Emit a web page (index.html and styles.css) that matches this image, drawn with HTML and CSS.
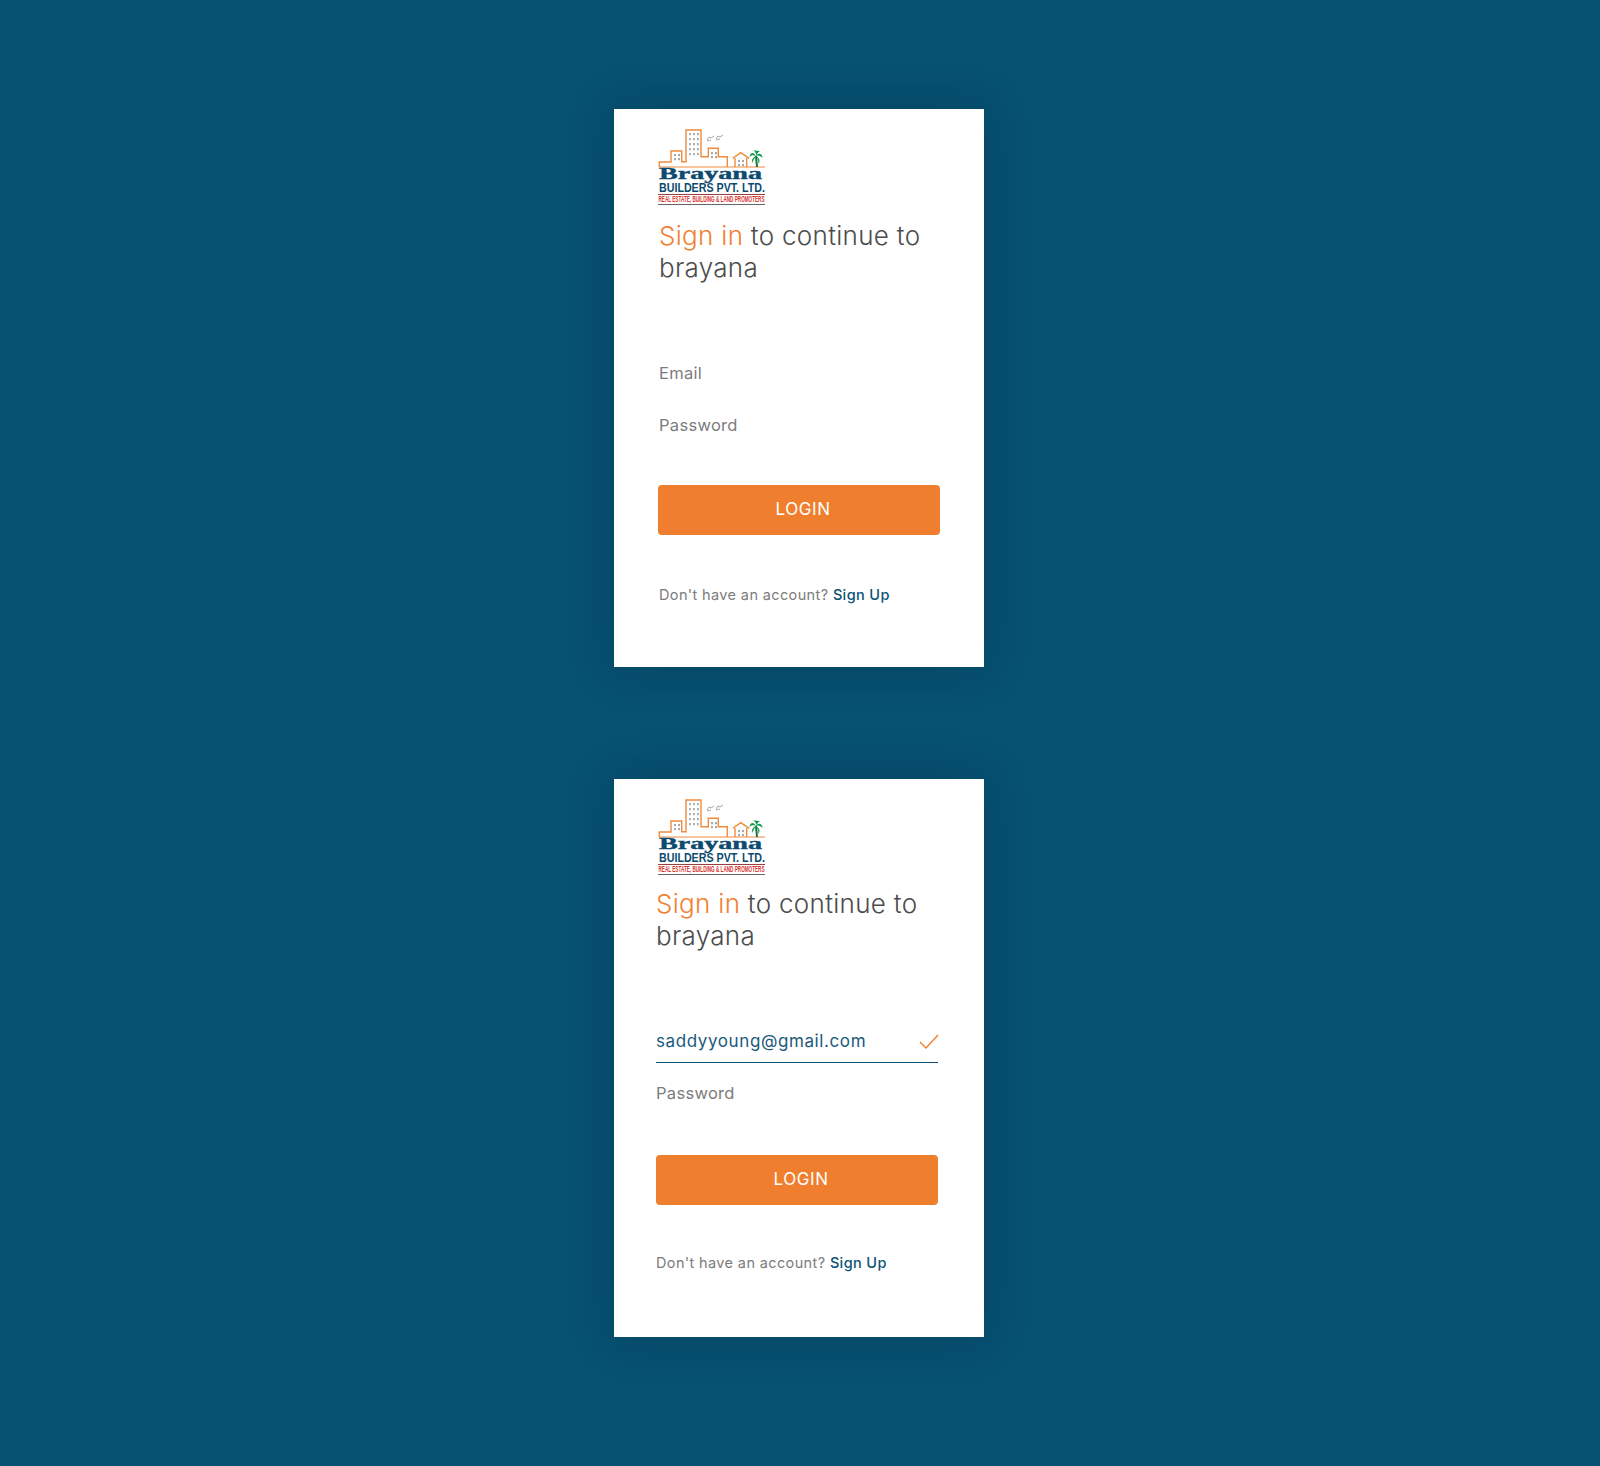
FILE: index.html
```html
<!DOCTYPE html>
<html lang="en">

<head>
    <meta charset="UTF-8">
    <meta name="viewport" content="width=device-width, initial-scale=1.0">
    <title>Sign in</title>
    <link rel="stylesheet" href="styles.css">
</head>

<body>
    <svg class="defs" width="0" height="0">
        <defs>
            <symbol id="logo" viewBox="0 0 108 78">
                <g fill="none" stroke="#f08a3c" stroke-width="1.4">
                    <path d="M1.3 39V34H13V23H23.7V33.7H28V2H43V28.7H50.3V20.3H60.3V28.7H69.3V39" />
                    <path d="M74.7 30.3L82.7 24.7L91.3 30.3" />
                    <path d="M77 30V39M88.7 30V39" />
                </g>
                <rect x="1" y="38.5" width="106" height="1" fill="#f08a3c" />
                <g fill="#a8a8a8">
                    <rect x="31" y="5" width="1.8" height="2.2" />
                    <rect x="35" y="5" width="1.8" height="2.2" />
                    <rect x="39" y="5" width="1.8" height="2.2" />
                    <rect x="31" y="10" width="1.8" height="2.2" />
                    <rect x="35" y="10" width="1.8" height="2.2" />
                    <rect x="39" y="10" width="1.8" height="2.2" />
                    <rect x="31" y="15" width="1.8" height="2.2" />
                    <rect x="35" y="15" width="1.8" height="2.2" />
                    <rect x="39" y="15" width="1.8" height="2.2" />
                    <rect x="31" y="20" width="1.8" height="2.2" />
                    <rect x="35" y="20" width="1.8" height="2.2" />
                    <rect x="39" y="20" width="1.8" height="2.2" />
                    <rect x="31" y="25" width="1.8" height="2.2" />
                    <rect x="35" y="25" width="1.8" height="2.2" />
                    <rect x="39" y="25" width="1.8" height="2.2" />
                    <rect x="16" y="26" width="2" height="2.2" />
                    <rect x="20" y="26" width="2" height="2.2" />
                    <rect x="16" y="30" width="2" height="2.2" />
                    <rect x="20" y="30" width="2" height="2.2" />
                    <rect x="53" y="24" width="2" height="2.2" />
                    <rect x="57" y="24" width="2" height="2.2" />
                    <rect x="53" y="28" width="2" height="2.2" />
                    <rect x="57" y="28" width="2" height="2.2" />
                    <rect x="80" y="32" width="2" height="2.2" />
                    <rect x="84" y="32" width="2" height="2.2" />
                    <rect x="80" y="36" width="2" height="2" />
                    <rect x="84" y="36" width="2" height="2" />
                </g>
                <path d="M49 12l2-3 2 1 3-2M49 13l4-1M58 11l2-3 2 1 3-2M58 12l4-1" fill="none" stroke="#8f8f8f" stroke-width="0.8" />
                <path d="M99 39L98 28" stroke="#17753a" stroke-width="2" />
                <path d="M98 28C95.500 24 92.500 24 91.500 29C93.500 27 95.500 27 98 28C95.500 29 93.500 31 94 35C95.500 32 96.500 30 98 28C99.500 30 100.500 32 100.500 36C102.500 33 101.500 30 98 28C100.500 27 102.500 28 104.500 30C104.500 26 100.500 24 98 28C98.500 26 97.500 23 94.500 22C96.500 23 100.500 22 102.500 24C100.500 23 99.500 25 98 28Z" fill="#0d9a4a" />
                <text class="logo-name" x="1" y="51" textLength="103" lengthAdjust="spacingAndGlyphs">Brayana</text>
                <text class="logo-sub" x="1" y="64" textLength="106" lengthAdjust="spacingAndGlyphs">BUILDERS PVT. LTD.</text>
                <rect x="0" y="66" width="107" height="0.9" fill="#8c2a2a" />
                <text class="logo-tag" x="0.5" y="74.3" textLength="106" lengthAdjust="spacingAndGlyphs">REAL ESTATE, BUILDING &amp; LAND PROMOTERS</text>
                <rect x="0" y="76" width="107" height="0.9" fill="#555" />
            </symbol>
        </defs>
    </svg>

    <div class="card">
        <svg class="logo" width="108" height="78"><use href="#logo"></use></svg>
        <div class="content">
            <h1><span>Sign in</span> to continue to brayana</h1>
            <div class="inputbox first">
                <label>Email</label>
            </div>
            <div class="inputbox">
                <label>Password</label>
            </div>
            <button type="submit">LOGIN</button>
            <p class="signup">Don't have an account? <a href="#">Sign Up</a></p>
        </div>
    </div>

    <div class="card filled">
        <svg class="logo" width="108" height="78"><use href="#logo"></use></svg>
        <div class="content">
            <h1><span>Sign in</span> to continue to brayana</h1>
            <div class="inputbox first active">
                <label>saddyyoung@gmail.com</label>
                <svg class="check" width="20" height="16" viewBox="0 0 20 16">
                    <path d="M1 8L7 14L19 1" fill="none" stroke="#f08030" stroke-width="1.4" />
                </svg>
            </div>
            <div class="inputbox">
                <label>Password</label>
            </div>
            <button type="submit">LOGIN</button>
            <p class="signup">Don't have an account? <a href="#">Sign Up</a></p>
        </div>
    </div>
</body>

</html>
```

FILE: styles.css
```css
* {
    box-sizing: border-box;
}

body {
    margin: 0;
    min-height: 100vh;
    padding: 109px 2px 128px 0;
    display: flex;
    flex-direction: column;
    align-items: center;
    gap: 112px;
    background: #075172;
    font-family: "Inter", sans-serif;
}

.defs {
    position: absolute;
}

.card {
    width: 370px;
    height: 558px;
    padding: 19px 44px 0;
    background: #fff;
    box-shadow: 0 0 40px rgba(0, 40, 60, 0.3);
}

.logo {
    display: block;
}

.logo-name {
    font-family: "Liberation Serif", serif;
    font-size: 17px;
    font-weight: 700;
    fill: #0c4a70;
    stroke: #0c4a70;
    stroke-width: 0.4;
}

.logo-sub {
    font-family: "Liberation Sans", sans-serif;
    font-size: 12.5px;
    font-weight: 700;
    fill: #0c4a70;
}

.logo-tag {
    font-family: "Liberation Sans", sans-serif;
    font-size: 8.8px;
    font-weight: 700;
    fill: #d8352f;
}

.content {
    padding-top: 14px;
}

.filled .content {
    margin: 0 2px 0 -2px;
    padding-top: 12px;
}

h1 {
    margin: 0 0 0 1px;
    color: #4c4c4c;
    font-size: 26px;
    font-weight: 350;
    line-height: 32px;
    letter-spacing: 0.3px;
}

.filled h1 {
    margin-left: 0;
}

h1 span {
    color: #f08030;
}

.inputbox {
    position: relative;
    height: 33px;
    margin-top: 19px;
    color: #7c7c7c;
    font-size: 16.5px;
    line-height: 22px;
    letter-spacing: 0.3px;
}

.inputbox.first {
    margin-top: 78px;
}

.inputbox label {
    display: block;
    margin-left: 1px;
}

.filled .inputbox label {
    margin-left: 0;
}

.inputbox.active {
    color: #1a5a7c;
    border-bottom: 1px solid #0b5374;
    font-size: 17px;
    letter-spacing: 0.6px;
}

.check {
    position: absolute;
    right: -1px;
    top: 4px;
}

button {
    display: block;
    width: 282px;
    height: 50px;
    margin-top: 38px;
    padding: 0 0 2px 8px;
    border: none;
    border-radius: 4px;
    background: #ef7f2f;
    color: #fff;
    font-family: inherit;
    font-size: 17px;
    letter-spacing: 0.6px;
}

.filled button {
    margin-top: 40px;
}

.signup {
    margin: 49px 0 0 1px;
    color: #7c7c7c;
    font-size: 14.5px;
    line-height: 22px;
    letter-spacing: 0.37px;
}

.filled .signup {
    margin: 47px 0 0;
}

.signup a {
    color: #0b5374;
    font-weight: 450;
    text-decoration: none;
}
```
